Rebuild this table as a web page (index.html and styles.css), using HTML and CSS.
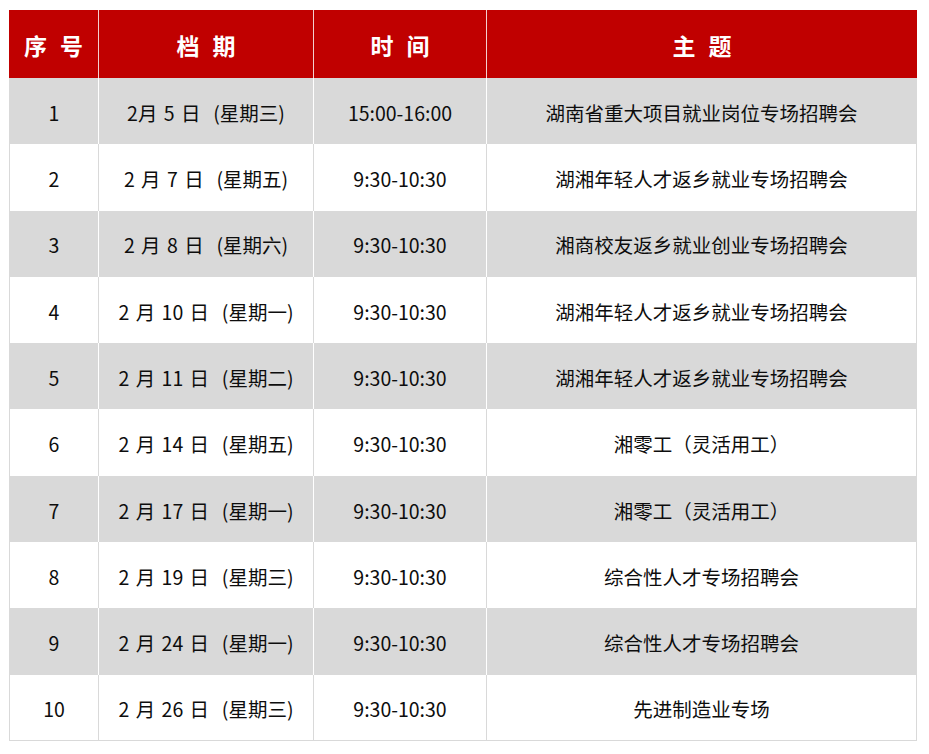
FILE: index.html
```html
<!DOCTYPE html>
<html lang="zh-CN">
<head>
<meta charset="utf-8">
<link rel="stylesheet" href="styles.css">
</head>
<body>
<table class="sched">
  <colgroup>
    <col class="c1"><col class="c2"><col class="c3"><col class="c4">
  </colgroup>
  <thead>
    <tr><th>序 号</th><th>档 期</th><th>时 间</th><th>主 题</th></tr>
  </thead>
  <tbody>
    <tr class="g"><td>1</td><td class="date">2月 5 日  (星期三)</td><td>15:00-16:00</td><td>湖南省重大项目就业岗位专场招聘会</td></tr>
    <tr class="w"><td>2</td><td class="date">2 月 7 日  (星期五)</td><td>9:30-10:30</td><td>湖湘年轻人才返乡就业专场招聘会</td></tr>
    <tr class="g"><td>3</td><td class="date">2 月 8 日  (星期六)</td><td>9:30-10:30</td><td>湘商校友返乡就业创业专场招聘会</td></tr>
    <tr class="w"><td>4</td><td class="date">2 月 10 日  (星期一)</td><td>9:30-10:30</td><td>湖湘年轻人才返乡就业专场招聘会</td></tr>
    <tr class="g"><td>5</td><td class="date">2 月 11 日  (星期二)</td><td>9:30-10:30</td><td>湖湘年轻人才返乡就业专场招聘会</td></tr>
    <tr class="w"><td>6</td><td class="date">2 月 14 日  (星期五)</td><td>9:30-10:30</td><td>湘零工（灵活用工）</td></tr>
    <tr class="g"><td>7</td><td class="date">2 月 17 日  (星期一)</td><td>9:30-10:30</td><td>湘零工（灵活用工）</td></tr>
    <tr class="w"><td>8</td><td class="date">2 月 19 日  (星期三)</td><td>9:30-10:30</td><td>综合性人才专场招聘会</td></tr>
    <tr class="g"><td>9</td><td class="date">2 月 24 日  (星期一)</td><td>9:30-10:30</td><td>综合性人才专场招聘会</td></tr>
    <tr class="w last"><td>10</td><td class="date">2 月 26 日  (星期三)</td><td>9:30-10:30</td><td>先进制造业专场</td></tr>
  </tbody>
</table>
</body>
</html>
```

FILE: styles.css
```css
html, body {
  margin: 0;
  padding: 0;
  background: #ffffff;
}
body {
  padding: 10px 0 0 9px;
  font-family: "Noto Sans CJK SC", "Noto Sans", sans-serif;
  color: #111;
}
.sched {
  border-collapse: separate;
  border-spacing: 0;
  width: 908px;
  table-layout: fixed;
}
.c1 { width: 90px; }
.c2 { width: 215px; }
.c3 { width: 173px; }
.c4 { width: 430px; }

.sched th {
  background: #c00000;
  color: #fff;
  font-size: 23px;
  font-weight: 700;
  height: 68px;
  padding: 2px 0 0;
  box-sizing: border-box;
  text-align: center;
  border-right: 1px solid #f3d0d0;
  white-space: pre;
  letter-spacing: 4px;
  text-indent: 4px;
}
.sched th:last-child { border-right: none; }

.sched td {
  height: 66.3px;
  padding: 3px 0 0;
  box-sizing: border-box;
  text-align: center;
  font-size: 19.5px;
  line-height: 1;
  white-space: pre;
  border-right: 1px solid #d9d9d9;
  color: #0d0d0d;
}
.sched td.date { word-spacing: 2px; }
.sched td:first-child { border-left: 1px solid #d9d9d9; }

.g td {
  background: #d9d9d9;
  border-right-color: #ffffff;
}
.g td:first-child { border-left-color: #d9d9d9; }
.g td:last-child { border-right-color: #d9d9d9; }

.w td { background: #ffffff; }
.last td { border-bottom: 1px solid #d9d9d9; }
```
